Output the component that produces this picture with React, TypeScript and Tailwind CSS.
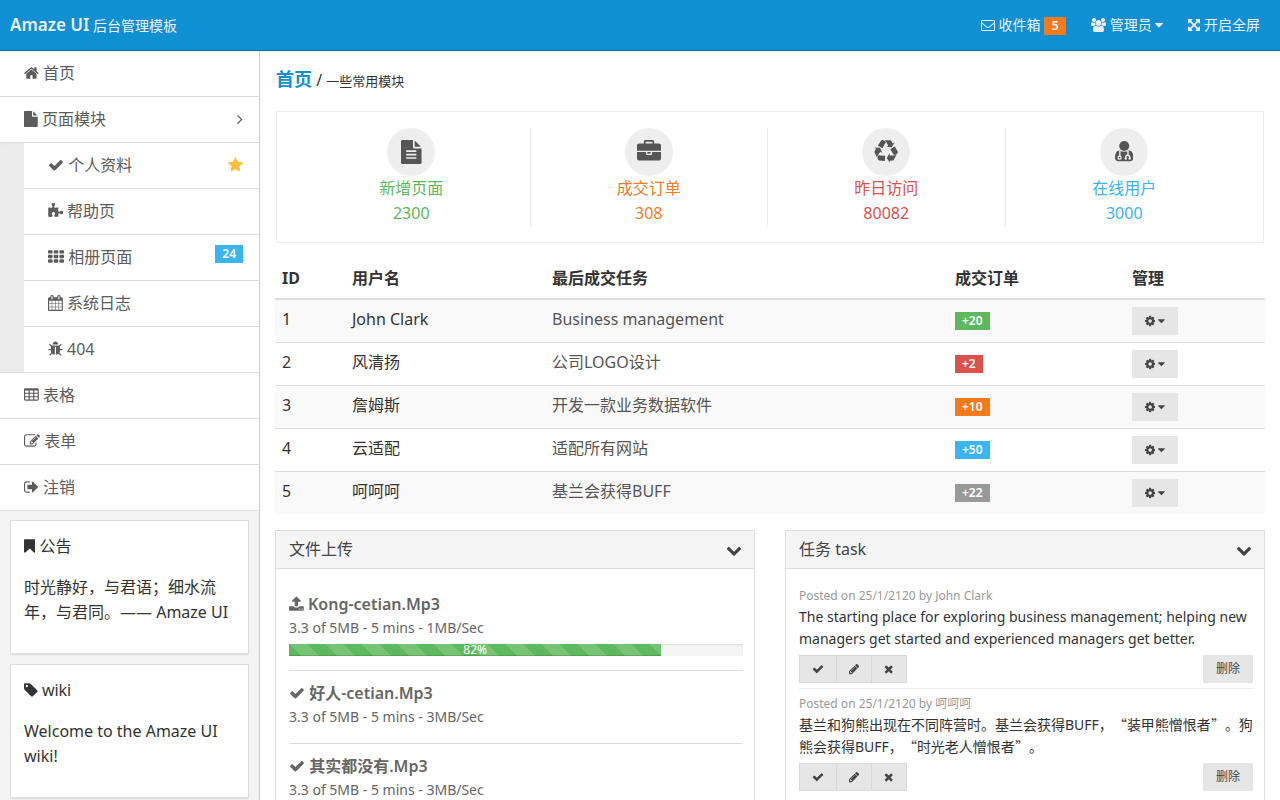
import type { ReactNode } from "react";
import clsx from "clsx";

/** Glyphs on a 1792-unit grid: left edge, advance width, outline. */
const GLYPHS = {
  home: [64, 1664, "M1472 992v480q0 26-19 45t-45 19h-384v-384h-256v384h-384q-26 0-45-19t-19-45v-480q0-1 .5-3t.5-3l575-474 575 474q1 2 1 6zm223-69l-62 74q-8 9-21 11h-3q-13 0-21-7l-692-577-692 577q-12 8-24 7-13-2-21-11l-62-74q-8-10-7-23.5t11-21.5l719-599q32-26 76-26t76 26l244 204v-195q0-14 9-23t23-9h192q14 0 23 9t9 23v408l219 182q10 8 11 21.5t-7 23.5z"],
  envelope: [0, 1792, "M1664 1504v-768q-32 36-69 66-268 206-426 338-51 43-83 67t-86.5 48.5-102.5 24.5h-2q-48 0-102.5-24.5t-86.5-48.5-83-67q-158-132-426-338-37-30-69-66v768q0 13 9.5 22.5t22.5 9.5h1472q13 0 22.5-9.5t9.5-22.5zm0-1051v-24.5l-.5-13-3-12.5-5.5-9-9-7.5-14-2.5h-1472q-13 0-22.5 9.5t-9.5 22.5q0 168 147 284 193 152 401 317 6 5 35 29.5t46 37.5 44.5 31.5 50.5 27.5 43 9h2q20 0 43-9t50.5-27.5 44.5-31.5 46-37.5 35-29.5q208-165 401-317 54-43 100.5-115.5t46.5-131.5zm128-37v1088q0 66-47 113t-113 47h-1472q-66 0-113-47t-47-113v-1088q0-66 47-113t113-47h1472q66 0 113 47t47 113z"],
  users: [0, 1920, "M593 896q-162 5-265 128h-134q-82 0-138-40.5t-56-118.5q0-353 124-353 6 0 43.5 21t97.5 42.5 119 21.5q67 0 133-23-5 37-5 66 0 139 81 256zm1071 637q0 120-73 189.5t-194 69.5h-874q-121 0-194-69.5t-73-189.5q0-53 3.5-103.5t14-109 26.5-108.5 43-97.5 62-81 85.5-53.5 111.5-20q10 0 43 21.5t73 48 107 48 135 21.5 135-21.5 107-48 73-48 43-21.5q61 0 111.5 20t85.5 53.5 62 81 43 97.5 26.5 108.5 14 109 3.5 103.5zm-1024-1277q0 106-75 181t-181 75-181-75-75-181 75-181 181-75 181 75 75 181zm704 384q0 159-112.5 271.5t-271.5 112.5-271.5-112.5-112.5-271.5 112.5-271.5 271.5-112.5 271.5 112.5 112.5 271.5zm576 225q0 78-56 118.5t-138 40.5h-134q-103-123-265-128 81-117 81-256 0-29-5-66 66 23 133 23 59 0 119-21.5t97.5-42.5 43.5-21q124 0 124 353zm-128-609q0 106-75 181t-181 75-181-75-75-181 75-181 181-75 181 75 75 181z"],
  arrows: [128, 1536, "M1411 541l-355 355 355 355 144-144q29-31 70-14 39 17 39 59v448q0 26-19 45t-45 19h-448q-42 0-59-40-17-39 14-69l144-144-355-355-355 355 144 144q31 30 14 69-17 40-59 40h-448q-26 0-45-19t-19-45v-448q0-42 40-59 39-17 69 14l144 144 355-355-355-355-144 144q-19 19-45 19-12 0-24-5-40-17-40-59v-448q0-26 19-45t45-19h448q42 0 59 40 17 39-14 69l-144 144 355 355 355-355-144-144q-31-30-14-69 17-40 59-40h448q26 0 45 19t19 45v448q0 42-39 59-13 5-25 5-26 0-45-19z"],
  caret: [384, 1024, "M1408 704q0 26-19 45l-448 448q-19 19-45 19t-45-19l-448-448q-19-19-19-45t19-45 45-19h896q26 0 45 19t19 45z"],
  file: [128, 1536, "M1152 512v-472q22 14 36 28l408 408q14 14 28 36h-472zm-128 32q0 40 28 68t68 28h544v1056q0 40-28 68t-68 28h-1344q-40 0-68-28t-28-68v-1600q0-40 28-68t68-28h800v544z"],
  fileText: [128, 1536, "M1596 476q14 14 28 36h-472v-472q22 14 36 28zm-476 164h544v1056q0 40-28 68t-68 28h-1344q-40 0-68-28t-28-68v-1600q0-40 28-68t68-28h800v544q0 40 28 68t68 28zm160 736v-64q0-14-9-23t-23-9h-704q-14 0-23 9t-9 23v64q0 14 9 23t23 9h704q14 0 23-9t9-23zm0-256v-64q0-14-9-23t-23-9h-704q-14 0-23 9t-9 23v64q0 14 9 23t23 9h704q14 0 23-9t9-23zm0-256v-64q0-14-9-23t-23-9h-704q-14 0-23 9t-9 23v64q0 14 9 23t23 9h704q14 0 23-9t9-23z"],
  angleRight: [576, 640, "M1171 960q0 13-10 23l-466 466q-10 10-23 10t-23-10l-50-50q-10-10-10-23t10-23l393-393-393-393q-10-10-10-23t10-23l50-50q10-10 23-10t23 10l466 466q10 10 10 23z"],
  check: [0, 1792, "M1671 566q0 40-28 68l-724 724-136 136q-28 28-68 28t-68-28l-136-136-362-362q-28-28-28-68t28-68l136-136q28-28 68-28t68 28l294 295 656-657q28-28 68-28t68 28l136 136q28 28 28 68z"],
  star: [64, 1664, "M1728 647q0 22-26 48l-363 354 86 500q1 7 1 20 0 21-10.5 35.5t-30.5 14.5q-19 0-40-12l-449-236-449 236q-22 12-40 12-21 0-31.5-14.5t-10.5-35.5q0-6 2-20l86-500-364-354q-25-27-25-48 0-37 56-46l502-73 225-455q19-41 49-41t49 41l225 455 502 73q56 9 56 46z"],
  puzzle: [64, 1664, "M1755 1083q0 81-44.5 135t-123.5 54q-41 0-77.5-17.5t-59-38-56.5-38-71-17.5q-110 0-110 124 0 39 16 115t15 115v5q-22 0-33 1-34 3-97.5 11.5t-115.5 13.5-98 5q-61 0-103-26.5t-42-83.5q0-37 17.5-71t38-56.5 38-59 17.5-77.5q0-79-54-123.5t-135-44.5q-84 0-143 45.5t-59 127.5q0 43 15 83t33.5 64.5 33.5 53 15 50.5q0 45-46 89-37 35-117 35-95 0-245-24-9-2-27.5-4t-27.5-4l-13-2q-1 0-3-1-2 0-2-1v-1024q2 1 17.5 3.5t34 5 21.5 3.5q150 24 245 24 80 0 117-35 46-44 46-89 0-22-15-50.5t-33.5-53-33.5-64.5-15-83q0-82 59-127.5t144-45.5q80 0 134 44.5t54 123.5q0 41-17.5 77.5t-38 59-38 56.5-17.5 71q0 57 42 83.5t103 26.5q64 0 180-15t163-17v2q-1 2-3.5 17.5t-5 34-3.5 21.5q-24 150-24 245 0 80 35 117 44 46 89 46 22 0 50.5-15t53-33.5 64.5-33.5 83-15q82 0 127.5 59t45.5 143z"],
  grid: [0, 1792, "M96 128h320q96 0 96 96v192q0 96-96 96h-320q-96 0-96-96v-192q0-96 96-96zm640 0h320q96 0 96 96v192q0 96-96 96h-320q-96 0-96-96v-192q0-96 96-96zm640 0h320q96 0 96 96v192q0 96-96 96h-320q-96 0-96-96v-192q0-96 96-96zM96 640h320q96 0 96 96v192q0 96-96 96h-320q-96 0-96-96v-192q0-96 96-96zm640 0h320q96 0 96 96v192q0 96-96 96h-320q-96 0-96-96v-192q0-96 96-96zm640 0h320q96 0 96 96v192q0 96-96 96h-320q-96 0-96-96v-192q0-96 96-96zM96 1152h320q96 0 96 96v192q0 96-96 96h-320q-96 0-96-96v-192q0-96 96-96zm640 0h320q96 0 96 96v192q0 96-96 96h-320q-96 0-96-96v-192q0-96 96-96zm640 0h320q96 0 96 96v192q0 96-96 96h-320q-96 0-96-96v-192q0-96 96-96z"],
  calendar: [64, 1664, "M192 1664h288v-288h-288v288zm352 0h320v-288h-320v288zm-352-352h288v-320h-288v320zm352 0h320v-320h-320v320zm-352-384h288v-288h-288v288zm736 736h320v-288h-320v288zm-384-736h320v-288h-320v288zm768 736h288v-288h-288v288zm-384-352h320v-320h-320v320zm-352-864v-288q0-13-9.5-22.5t-22.5-9.5h-64q-13 0-22.5 9.5t-9.5 22.5v288q0 13 9.5 22.5t22.5 9.5h64q13 0 22.5-9.5t9.5-22.5zm736 864h288v-320h-288v320zm-384-384h320v-288h-320v288zm384 0h288v-288h-288v288zm32-480v-288q0-13-9.5-22.5t-22.5-9.5h-64q-13 0-22.5 9.5t-9.5 22.5v288q0 13 9.5 22.5t22.5 9.5h64q13 0 22.5-9.5t9.5-22.5zm384-64v1280q0 52-38 90t-90 38h-1408q-52 0-90-38t-38-90v-1280q0-52 38-90t90-38h128v-96q0-66 47-113t113-47h64q66 0 113 47t47 113v96h384v-96q0-66 47-113t113-47h64q66 0 113 47t47 113v96h128q52 0 90 38t38 90z"],
  bug: [64, 1664, "M1696 960q0 26-19 45t-45 19h-224q0 171-67 290l208 209q19 19 19 45t-19 45q-18 19-45 19t-45-19l-198-197q-5 5-15 13t-42 28.5-65 36.5-82 29-97 13v-896h-128v896q-51 0-101.5-13.5t-87-33-66-39-43.5-32.5l-15-14-183 207q-20 21-48 21-24 0-43-16-19-18-20.5-44.5t15.5-46.5l202-227q-58-114-58-274h-224q-26 0-45-19t-19-45 19-45 45-19h224v-294l-173-173q-19-19-19-45t19-45 45-19 45 19l173 173h844l173-173q19-19 45-19t45 19 19 45-19 45l-173 173v294h224q26 0 45 19t19 45zm-480-576h-640q0-133 93.5-226.5t226.5-93.5 226.5 93.5 93.5 226.5z"],
  table: [64, 1664, "M576 1376v-192q0-14-9-23t-23-9h-320q-14 0-23 9t-9 23v192q0 14 9 23t23 9h320q14 0 23-9t9-23zm0-384v-192q0-14-9-23t-23-9h-320q-14 0-23 9t-9 23v192q0 14 9 23t23 9h320q14 0 23-9t9-23zm512 384v-192q0-14-9-23t-23-9h-320q-14 0-23 9t-9 23v192q0 14 9 23t23 9h320q14 0 23-9t9-23zm-512-768v-192q0-14-9-23t-23-9h-320q-14 0-23 9t-9 23v192q0 14 9 23t23 9h320q14 0 23-9t9-23zm512 384v-192q0-14-9-23t-23-9h-320q-14 0-23 9t-9 23v192q0 14 9 23t23 9h320q14 0 23-9t9-23zm512 384v-192q0-14-9-23t-23-9h-320q-14 0-23 9t-9 23v192q0 14 9 23t23 9h320q14 0 23-9t9-23zm-512-768v-192q0-14-9-23t-23-9h-320q-14 0-23 9t-9 23v192q0 14 9 23t23 9h320q14 0 23-9t9-23zm512 384v-192q0-14-9-23t-23-9h-320q-14 0-23 9t-9 23v192q0 14 9 23t23 9h320q14 0 23-9t9-23zm0-384v-192q0-14-9-23t-23-9h-320q-14 0-23 9t-9 23v192q0 14 9 23t23 9h320q14 0 23-9t9-23zm128-320v1088q0 66-47 113t-113 47h-1344q-66 0-113-47t-47-113v-1088q0-66 47-113t113-47h1344q66 0 113 47t47 113z"],
  edit: [0, 1792, "M888 1184l116-116-152-152-116 116v56h96v96h56zm440-720q-16-16-33 1l-350 350q-17 17-1 33t33-1l350-350q17-17 1-33zm80 594v190q0 119-84.5 203.5t-203.5 84.5h-832q-119 0-203.5-84.5t-84.5-203.5v-832q0-119 84.5-203.5t203.5-84.5h832q63 0 117 25 15 7 18 23 3 17-9 29l-49 49q-14 14-32 8-23-6-45-6h-832q-66 0-113 47t-47 113v832q0 66 47 113t113 47h832q66 0 113-47t47-113v-126q0-13 9-22l64-64q15-15 35-7t20 29zm-96-738l288 288-672 672h-288v-288zm444 132l-92 92-288-288 92-92q28-28 68-28t68 28l152 152q28 28 28 68t-28 68z"],
  signOut: [64, 1664, "M704 1440q0 4 1 20t.5 26.5-3 23.5-10 19.5-20.5 6.5h-320q-119 0-203.5-84.5t-84.5-203.5v-704q0-119 84.5-203.5t203.5-84.5h320q13 0 22.5 9.5t9.5 22.5q0 4 1 20t.5 26.5-3 23.5-10 19.5-20.5 6.5h-320q-66 0-113 47t-47 113v704q0 66 47 113t113 47h312l11.5 1 11.5 3 8 5.5 7 9 2 13.5zm928-544q0 26-19 45l-544 544q-19 19-45 19t-45-19-19-45v-288h-448q-26 0-45-19t-19-45v-384q0-26 19-45t45-19h448v-288q0-26 19-45t45-19 45 19l544 544q19 19 19 45z"],
  bookmark: [256, 1280, "M1420 128q23 0 44 9 33 13 52.5 41t19.5 62v1289q0 34-19.5 62t-52.5 41q-19 8-44 8-48 0-83-32l-441-424-441 424q-36 33-83 33-23 0-44-9-33-13-52.5-41t-19.5-62v-1289q0-34 19.5-62t52.5-41q21-9 44-9h1048z"],
  tag: [128, 1536, "M576 448q0-53-37.5-90.5t-90.5-37.5-90.5 37.5-37.5 90.5 37.5 90.5 90.5 37.5 90.5-37.5 37.5-90.5zm1067 576q0 53-37 90l-491 492q-39 37-91 37-53 0-90-37l-715-716q-38-37-64.5-101t-26.5-117v-416q0-52 38-90t90-38h416q53 0 117 26.5t102 64.5l715 714q37 39 37 91z"],
  briefcase: [0, 1792, "M640 256h512v-128h-512v128zm1152 640v480q0 66-47 113t-113 47h-1472q-66 0-113-47t-47-113v-480h672v160q0 26 19 45t45 19h320q26 0 45-19t19-45v-160h672zm-768 0v128h-256v-128h256zm768-480v384h-1792v-384q0-66 47-113t113-47h352v-160q0-40 28-68t68-28h576q40 0 68 28t28 68v160h352q66 0 113 47t47 113z"],
  recycle: [0, 1792, "M836 1169l-15 368-2 22-420-29q-36-3-67-31.5t-47-65.5q-11-27-14.5-55t4-65 12-55 21.5-64 19-53q78 12 509 28zm-387-586l180 379-147-92q-63 72-111.5 144.5t-72.5 125-39.5 94.5-18.5 63l-4 21-190-357q-17-26-18-56t6-47l8-18q35-63 114-188l-140-86zm1231 517l-188 359q-12 29-36.5 46.5t-43.5 20.5l-18 4q-71 7-219 12l8 164-230-367 211-362 7 173q170 16 283 5t170-33zm-785-924q-47 63-265 435l-317-187-19-12 225-356q20-31 60-45t80-10q24 2 48.5 12t42 21 41.5 33 36 34.5 36 39.5 32 35zm655 307l212 363q18 37 12.5 76t-27.5 74q-13 20-33 37t-38 28-48.5 22-47 16-51.5 14-46 12q-34-72-265-436l313-195zm-143-226l142-83-220 373-419-20 151-86q-34-89-75-166t-75.5-123.5-64.5-80-47-46.5l-17-13 405 1q31-3 58 10.5t39 28.5l11 15q39 61 112 190z"],
  upload: [64, 1664, "M1344 1472q0-26-19-45t-45-19-45 19-19 45 19 45 45 19 45-19 19-45zm256 0q0-26-19-45t-45-19-45 19-19 45 19 45 45 19 45-19 19-45zm128-224v320q0 40-28 68t-68 28h-1472q-40 0-68-28t-28-68v-320q0-40 28-68t68-28h427q21 56 70.5 92t110.5 36h256q61 0 110.5-36t70.5-92h427q40 0 68 28t28 68zm-325-648q-17 40-59 40h-256v448q0 26-19 45t-45 19h-256q-26 0-45-19t-19-45v-448h-256q-42 0-59-40-17-39 14-69l448-448q18-19 45-19t45 19l448 448q31 30 14 69z"],
  chevronDown: [0, 1792, "M1683 808l-742 741q-19 19-45 19t-45-19l-742-741q-19-19-19-45.5t19-45.5l166-165q19-19 45-19t45 19l531 531 531-531q19-19 45-19t45 19l166 165q19 19 19 45.5t-19 45.5z"],
  cog: [128, 1536, "M1152 896q0-106-75-181t-181-75-181 75-75 181 75 181 181 75 181-75 75-181zm512-109v222q0 12-8 23t-20 13l-185 28q-19 54-39 91 35 50 107 138 10 12 10 25t-9 23q-27 37-99 108t-94 71q-12 0-26-9l-138-108q-44 23-91 38-16 136-29 186-7 28-36 28h-222q-14 0-24.5-8.5t-11.5-21.5l-28-184q-49-16-90-37l-141 107q-10 9-25 9-14 0-25-11-126-114-165-168-7-10-7-23 0-12 8-23 15-21 51-66.5t54-70.5q-27-50-41-99l-183-27q-13-2-21-12.5t-8-23.5v-222q0-12 8-23t19-13l186-28q14-46 39-92-40-57-107-138-10-12-10-24 0-10 9-23 26-36 98.5-107.5t94.5-71.5q13 0 26 10l138 107q44-23 91-38 16-136 29-186 7-28 36-28h222q14 0 24.5 8.5t11.5 21.5l28 184q49 16 90 37l142-107q9-9 24-9 13 0 25 10 129 119 165 170 7 8 7 22 0 12-8 23-15 21-51 66.5t-54 70.5q26 50 41 98l183 28q13 2 21 12.5t8 23.5z"],
  pencil: [128, 1536, "M491 1536l91-91-235-235-91 91v107h128v128h107zm523-928q0-22-22-22-10 0-17 7l-542 542q-7 7-7 17 0 22 22 22 10 0 17-7l542-542q7-7 7-17zm-54-192l416 416-832 832h-416v-416zm683 96q0 53-37 90l-166 166-416-416 166-165q36-38 90-38 53 0 91 38l235 234q37 39 37 91z"],
  times: [192, 1408, "M1490 1322q0 40-28 68l-136 136q-28 28-68 28t-68-28l-294-294-294 294q-28 28-68 28t-68-28l-136-136q-28-28-28-68t28-68l294-294-294-294q-28-28-28-68t28-68l136-136q28-28 68-28t68 28l294 294 294-294q28-28 68-28t68 28l136 136q28 28 28 68t-28 68l-294 294 294 294q28 28 28 68z"],
} as const;

type IconName = keyof typeof GLYPHS;

function Icon({ name, className }: { name: IconName; className?: string }) {
  const [x, width, d] = GLYPHS[name];
  return (
    <svg
      viewBox={`${x} 0 ${width} 1792`}
      aria-hidden="true"
      className={clsx("inline-block h-[1em] w-auto align-[-2px]", className)}
      fill="currentColor"
    >
      <path d={d} />
    </svg>
  );
}

function DoctorIcon() {
  return (
    <svg viewBox="192 128 1408 1600" aria-hidden="true" className="h-[21px] w-auto">
      <path
        fill="currentColor"
        d="M1600 1405q0 120-73 189.5t-194 69.5h-874q-121 0-194-69.5t-73-189.5q0-140 33-270t110-210 215-80q140 100 346 100t346-100q138 0 215 80t110 210 33 270z"
      />
      <circle cx="896" cy="512" r="384" fill="currentColor" />
      <g fill="none" stroke="#eee" strokeWidth="110">
        <path d="M560 850v430" />
        <path d="M1010 1480v-110q0-150 150-150t150 150v110M1160 1220q40-120 20-350" />
      </g>
      <circle cx="540" cy="1400" r="115" fill="currentColor" stroke="#eee" strokeWidth="100" />
      <circle cx="1010" cy="1470" r="90" fill="#eee" />
      <circle cx="1310" cy="1470" r="90" fill="#eee" />
    </svg>
  );
}

function Badge({ className, children }: { className?: string; children: ReactNode }) {
  return (
    <span
      className={clsx(
        "inline-block min-w-[22px] px-[7px] text-center text-xs leading-[18px] font-semibold text-white",
        className,
      )}
    >
      {children}
    </span>
  );
}

function NavItem({
  icon,
  label,
  first,
  children,
}: {
  icon: IconName;
  label: string;
  first?: boolean;
  children?: ReactNode;
}) {
  return (
    <li className={clsx("bg-white", !first && "border-t border-[#dedede]")}>
      <a
        href="#"
        className="flex items-start justify-between py-[10px] pr-4 pl-6 leading-[25px] text-[#5c5c5c]"
      >
        <span>
          <Icon name={icon} /> {label}
        </span>
        {children}
      </a>
    </li>
  );
}

function SideNote({ icon, title, children }: { icon: IconName; title: string; children: ReactNode }) {
  return (
    <section className="mx-[10px] mt-[9px] mb-[10px] border border-[#dedede] bg-white px-[13px] pt-[13px] pb-3 shadow-[0_1px_1px_rgba(0,0,0,0.08)] not-first:mt-0">
      <h2 className="mb-4 leading-[25px]">
        <Icon name={icon} /> {title}
      </h2>
      <p className="mb-4 leading-[25px]">{children}</p>
    </section>
  );
}

function Sidebar() {
  return (
    <aside className="w-[260px] shrink-0 border-r border-[#cecece] bg-[#f3f3f3]">
      <ul className="border-b border-[#dedede]">
        <NavItem icon="home" label="首页" first />
        <NavItem icon="file" label="页面模块">
          <Icon name="angleRight" className="mt-1" />
        </NavItem>
        <li className="bg-[#ececec] pl-6 shadow-[inset_0_3px_3px_-2px_rgba(0,0,0,0.08)]">
          <ul>
            <NavItem icon="check" label="个人资料">
              <Icon name="star" className="mt-1 text-[#ffbe40]" />
            </NavItem>
            <NavItem icon="puzzle" label="帮助页" />
            <NavItem icon="grid" label="相册页面">
              <Badge className="bg-[#3bb4f2]">24</Badge>
            </NavItem>
            <NavItem icon="calendar" label="系统日志" />
            <NavItem icon="bug" label="404" />
          </ul>
        </li>
        <NavItem icon="table" label="表格" />
        <NavItem icon="edit" label="表单" />
        <NavItem icon="signOut" label="注销" />
      </ul>
      <div>
        <SideNote icon="bookmark" title="公告">
          时光静好，与君语；细水流年，与君同。—— Amaze UI
        </SideNote>
        <SideNote icon="tag" title="wiki">
          Welcome to the Amaze UI wiki!
        </SideNote>
      </div>
    </aside>
  );
}

const STATS = [
  { icon: <Icon name="fileText" />, label: "新增页面", value: "2300", color: "text-[#5eb95e]" },
  { icon: <Icon name="briefcase" />, label: "成交订单", value: "308", color: "text-[#f37b1d]" },
  { icon: <Icon name="recycle" />, label: "昨日访问", value: "80082", color: "text-[#dd514c]" },
  { icon: <DoctorIcon />, label: "在线用户", value: "3000", color: "text-[#3bb4f2]" },
];

const ROWS = [
  { id: 1, name: "John Clark", task: "Business management", count: "+20", color: "bg-[#5eb95e]" },
  { id: 2, name: "风清扬", task: "公司LOGO设计", count: "+2", color: "bg-[#dd514c]" },
  { id: 3, name: "詹姆斯", task: "开发一款业务数据软件", count: "+10", color: "bg-[#f37b1d]" },
  { id: 4, name: "云适配", task: "适配所有网站", count: "+50", color: "bg-[#3bb4f2]" },
  { id: 5, name: "呵呵呵", task: "基兰会获得BUFF", count: "+22", color: "bg-[#999999]" },
];

const FILES: { icon: IconName; name: string; info: string; progress?: number }[] = [
  { icon: "upload", name: "Kong-cetian.Mp3", info: "3.3 of 5MB - 5 mins - 1MB/Sec", progress: 82 },
  { icon: "check", name: "好人-cetian.Mp3", info: "3.3 of 5MB - 5 mins - 3MB/Sec" },
  { icon: "check", name: "其实都没有.Mp3", info: "3.3 of 5MB - 5 mins - 3MB/Sec" },
];

const TASKS = [
  {
    author: "John Clark",
    text: "The starting place for exploring business management; helping new managers get started and experienced managers get better.",
  },
  {
    author: "呵呵呵",
    text: "基兰和狗熊出现在不同阵营时。基兰会获得BUFF，“装甲熊憎恨者”。狗熊会获得BUFF，“时光老人憎恨者”。",
  },
];

/** Curly quotes take the full-width form of the Chinese face. */
function MixedText({ text }: { text: string }) {
  return text.split(/([“”])/).map((part, i) =>
    part === "“" || part === "”" ? (
      <span key={i} className="font-['Noto_Sans_CJK_SC',sans-serif] leading-none">
        {part}
      </span>
    ) : (
      part
    ),
  );
}

function Panel({ title, children }: { title: string; children: ReactNode }) {
  return (
    <section className="min-w-0 border border-[#dddddd] bg-white">
      <h2 className="border-b border-[#dddddd] bg-[#f5f5f5] text-[#444]">
        <button type="button" className="flex w-full items-center justify-between py-[6px] pr-3 pl-[13px] leading-[25px]">
          {title}
          <Icon name="chevronDown" />
        </button>
      </h2>
      <div className="py-3 pr-[11px] pl-[13px]">{children}</div>
    </section>
  );
}

function Progress({ value }: { value: number }) {
  return (
    <div
      role="progressbar"
      aria-valuenow={value}
      aria-valuemin={0}
      aria-valuemax={100}
      className="mt-[5px] h-3 bg-[#f5f5f5] shadow-[inset_0_1px_2px_rgba(0,0,0,0.1)]"
    >
      <div
        className="h-full bg-[#5eb95e] bg-[linear-gradient(45deg,rgba(255,255,255,0.15)_25%,transparent_25%,transparent_50%,rgba(255,255,255,0.15)_50%,rgba(255,255,255,0.15)_75%,transparent_75%,transparent)] bg-[length:36px_36px] text-center text-xs leading-3 text-white shadow-[inset_0_-1px_0_rgba(0,0,0,0.15)]"
        style={{ width: `${value}%` }}
      >
        {value}%
      </div>
    </div>
  );
}

const groupButton = "h-7 border-y border-r border-[#d8d8d8] bg-[#e6e6e6] px-3 text-xs text-[#444]";

export default function App() {
  return (
    <div className="flex min-h-screen flex-col bg-white font-['Noto_Sans','Noto_Sans_CJK_SC',sans-serif] text-base text-[#333]">
      <header className="flex h-[51px] items-center justify-between border-b border-[#0c6ea6] bg-[#0e90d2] pr-5 pl-[10px] text-sm text-[#eee]">
        <div className="leading-[25px]">
          <strong className="text-[17px] font-semibold">Amaze UI</strong> <small className="text-sm">后台管理模板</small>
        </div>
        <nav className="flex items-center gap-[25px]">
          <a href="#">
            <Icon name="envelope" /> 收件箱 <Badge className="bg-[#f37b1d]">5</Badge>
          </a>
          <a href="#">
            <Icon name="users" /> 管理员 <Icon name="caret" />
          </a>
          <a href="#">
            <Icon name="arrows" /> 开启全屏
          </a>
        </nav>
      </header>

      <div className="flex grow">
        <Sidebar />

        <main className="min-w-0 grow px-[15px] pb-4">
          <div className="px-px pt-4 pb-[17px] leading-[25px]">
            <strong className="text-lg leading-[25px] text-[#0e90d2]">首页</strong> /{" "}
            <small className="text-[13px]">一些常用模块</small>
          </div>

          <ul className="mx-px grid grid-cols-4 border border-[#e9ecec] py-4 pr-5 pl-4 text-center leading-[25px]">
            {STATS.map((s) => (
              <li key={s.label} className="border-r border-[#e9ecec] last:border-r-0">
                <a href="#" className={clsx("block", s.color)}>
                  <span className="mx-auto flex size-12 items-center justify-center rounded-full bg-[#eee] pb-px text-2xl text-[#555]">
                    {s.icon}
                  </span>
                  {s.label}
                  <br />
                  {s.value}
                </a>
              </li>
            ))}
          </ul>

          <table className="mt-4 mb-4 w-full table-fixed text-left leading-[25px]">
            <thead>
              <tr className="border-b-2 border-[#dddddd]">
                <th className="w-[70px] px-[7px] py-[7px]">ID</th>
                <th className="w-[200px] px-[7px]">用户名</th>
                <th className="px-[7px]">最后成交任务</th>
                <th className="w-[177px] px-[7px]">成交订单</th>
                <th className="w-[140px] px-[7px]">管理</th>
              </tr>
            </thead>
            <tbody>
              {ROWS.map((row) => (
                <tr
                  key={row.id}
                  className="border-b border-[#dddddd] align-top last:border-b-0 odd:bg-[#f9f9f9]"
                >
                  <td className="p-[7px]">{row.id}</td>
                  <td className="p-[7px]">{row.name}</td>
                  <td className="p-[7px]">
                    <a href="#" className="text-[#555]">
                      {row.task}
                    </a>
                  </td>
                  <td className="p-[7px]">
                    <Badge className={row.color}>{row.count}</Badge>
                  </td>
                  <td className="p-[7px]">
                    <button
                      type="button"
                      aria-label="管理"
                      className="flex h-7 items-center gap-[3px] bg-[#e6e6e6] px-[13px] text-xs text-[#444]"
                    >
                      <Icon name="cog" />
                      <Icon name="caret" />
                    </button>
                  </td>
                </tr>
              ))}
            </tbody>
          </table>

          <div className="grid grid-cols-2 gap-[30px]">
            <Panel title="文件上传">
              <ul className="pt-px text-[#666]">
                {FILES.map((file) => (
                  <li
                    key={file.name}
                    className={clsx(
                      "border-b border-[#dddddd] pt-[10px] last:border-b-0",
                      file.progress ? "pb-[14px]" : "pb-[15px]",
                    )}
                  >
                    <strong className="block leading-[25px] font-semibold">
                      <Icon name={file.icon} /> {file.name}
                    </strong>
                    <p className="text-sm leading-[22px]">{file.info}</p>
                    {file.progress && <Progress value={file.progress} />}
                  </li>
                ))}
              </ul>
            </Panel>

            <Panel title="任务 task">
              <ul>
                {TASKS.map((task) => (
                  <li key={task.author} className="border-b border-[#eee] pt-1 pb-[5px] last:border-b-0">
                    <div className="h-[21px] text-xs leading-[21px] text-[#999]">
                      Posted on 25/1/2120 by {task.author}
                    </div>
                    <p className="text-sm leading-[22px] [text-spacing-trim:space-all]">
                      <MixedText text={task.text} />
                    </p>
                    <div className="mt-[5px] flex justify-between">
                      <div className="flex border-l border-[#d8d8d8]">
                        <button type="button" aria-label="完成" className={groupButton}>
                          <Icon name="check" />
                        </button>
                        <button type="button" aria-label="编辑" className={groupButton}>
                          <Icon name="pencil" />
                        </button>
                        <button type="button" aria-label="关闭" className={groupButton}>
                          <Icon name="times" />
                        </button>
                      </div>
                      <button type="button" className="h-7 bg-[#e6e6e6] px-[13px] text-xs text-[#444]">
                        删除
                      </button>
                    </div>
                  </li>
                ))}
              </ul>
            </Panel>
          </div>
        </main>
      </div>
    </div>
  );
}
